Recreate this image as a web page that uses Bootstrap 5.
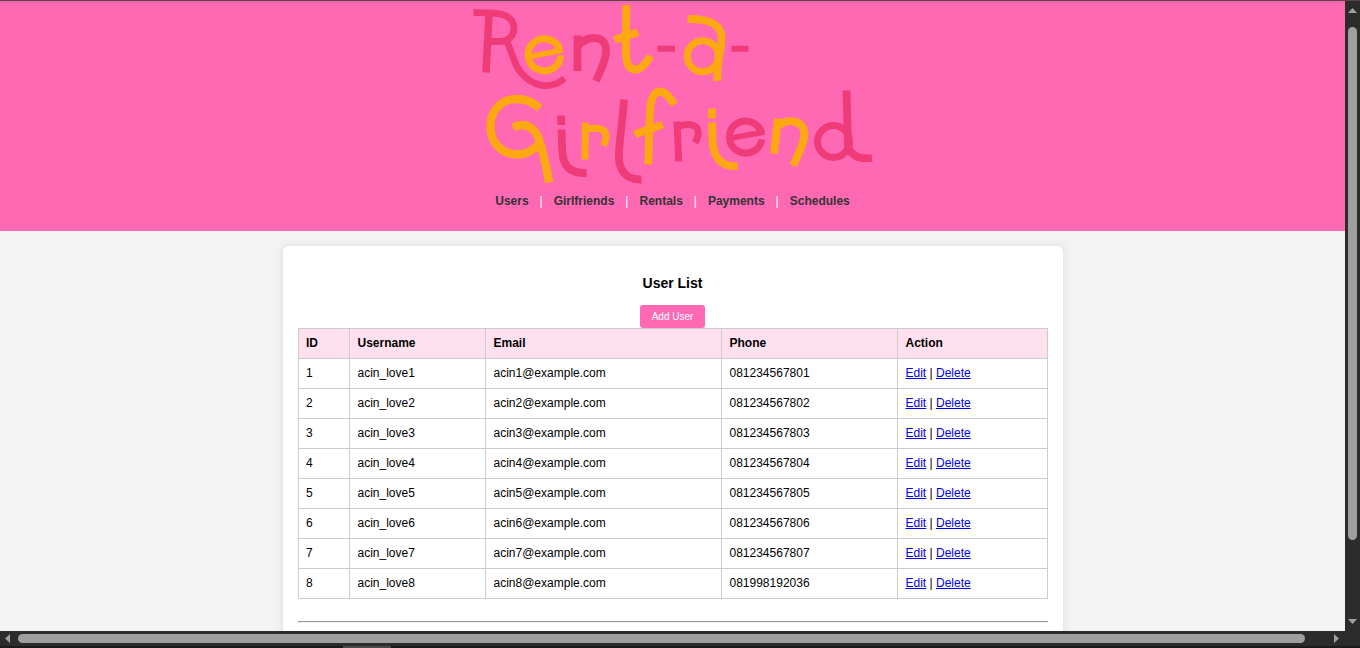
<!DOCTYPE html>
<html lang="en">
<head>
<meta charset="utf-8">
<meta name="viewport" content="width=device-width, initial-scale=1">
<title>Rent-a-Girlfriend</title>
<link href="https://cdn.jsdelivr.net/npm/bootstrap@5.3.0/dist/css/bootstrap.min.css" rel="stylesheet">
<style>
  body { font-family: "Liberation Sans", Arial, sans-serif; font-size: 12px; line-height: 14px; color: #000; background: #2c2c2c; }
  .window-frame { height: 648px; border-top: 1px solid #5a4343; }
  .page-row { height: 630px; }
  .page-view { background: #f3f3f3; }
  .site-header { background: #ff69b4; height: 230px; }
  .logo { width: 410px; height: 190px; margin-left: 5px; }
  .site-nav { gap: 11.3px; font-weight: 700; color: #fff; padding-top: 3px; }
  .site-nav span { font-weight: 400; width: 2.5px; display: flex; justify-content: center; }
  .site-nav a { color: #333; text-decoration: none; }
  .panel { width: 780px; height: 520px; margin-top: 15px; padding: 29px 15px 0; background: #fff; border-radius: 6px; box-shadow: 0 0 10px rgba(0,0,0,.1); }
  .panel h1 { font-size: 14px; line-height: 16px; font-weight: 700; margin: 0 0 14px; }
  .btn-add { background: #ff69b4; color: #fff; font-size: 10px; line-height: 11px; width: 65px; height: 23px; padding: 6px 0; border: 0; border-radius: 3px; }
  .user-table { width: 749px; margin-left: 1px; table-layout: fixed; border-collapse: collapse; }
  .user-table th, .user-table td { height: 30px; padding: 0 8px 1px 7.5px; border: 1px solid #ccc; text-align: left; vertical-align: middle; }
  .user-table th:first-child, .user-table td:first-child { padding-left: 7px; }
  .user-table th { background: #ffe0ee; }
  .user-table a { color: #00e; text-decoration: underline; }
  .rule { height: 2px; margin-top: 22px; border-top: 1px solid #9a9a9a; border-bottom: 1px solid #eee; border-left: 1px solid #9a9a9a; }
  .vbar { width: 15px; padding: 7px 0 7px; }
  .vthumb { width: 9px; height: 513px; margin-top: 14px; border-radius: 5px; background: #9f9f9f; }
  .hbar { height: 15px; padding-left: 5px; }
  .hthumb { width: 1287px; height: 9px; margin-left: 8px; margin-right: 29px; border-radius: 5px; background: #9f9f9f; }
  .taskbar { height: 2px; background: #1c1a1b; padding-left: 343px; }
  .taskbar div { width: 48px; height: 2px; background: #484848; }
  .arrow { fill: #9f9f9f; display: block; flex: none; }
</style>
</head>
<body class="overflow-hidden">
<div class="window-frame d-flex flex-column overflow-hidden">
  <div class="page-row d-flex flex-shrink-0">
    <main class="page-view flex-grow-1 d-flex flex-column align-items-center overflow-hidden">
      <header class="site-header w-100 flex-shrink-0 d-flex flex-column align-items-center">
        <svg class="logo flex-shrink-0" viewBox="470 1 410 190" fill="none" stroke-width="7.8" role="img" aria-label="Rent-a-Girlfriend">
          <g stroke="#ef3b78">
            <path stroke-width="7.500" d="M489 14L486 72.500"/>
            <path stroke-width="6.800" d="M473.500 12.700C484 12.500 494 12.500 502 14.500C510 16.500 514 22 514 29C513.500 37 507 41 501 41.500L490 41.500M507 42C512 52 513 61 519 70C532 88 551 90 564.500 78.500"/>
            <path d="M577.500 35.500V71M578 46C583 40 588 38 594 38C604 38 606.500 45 606 53C605 63 600 71 596 81"/>
            <path stroke-width="6" d="M657.500 48.800H675M731.500 48.800H748.500"/>
            <path d="M561.200 115.500V125M561.500 129.500C562 138 561.500 148 563 157C565 168 573 173.500 586.500 173M624 99.500C623 117 620 136 619 152C617.500 170 626 180 641.500 179.500"/>
            <path stroke-width="7" d="M677 121.500L678.700 161.500M680 126C687 123.500 694 124.500 697 128C699.500 133 698 138 695 142.500"/>
            <path stroke-width="5.500" d="M731 138L764.500 132"/>
            <path stroke-width="7" d="M761.400 132.700A16.300 16 0 1 0 761.800 139.500"/>
            <path d="M846.500 90.500L848 145C849 154 858 160 872 158"/><circle cx="833.500" cy="141.500" r="16" stroke-width="7"/>
          </g>
          <g stroke="#fca811">
            <path stroke-width="5.500" d="M528 57L563 50"/>
            <path stroke-width="7" d="M559.800 50.700A16.300 16 0 1 0 560.700 56.500" transform="translate(0 -1.200)"/>
            <path d="M626.300 5C626.500 20 625.500 35 626 53C626 64 629 70 636 69.500C642 69 646 63 650.500 56M614.500 40C622 37 629 36 638 32"/>
            <path d="M687.500 19C698 19 708 20 714 24C720 28 722 34 721.500 40C721 50 716 66 717.500 81"/><circle cx="702.700" cy="56.300" r="15.500" stroke-width="7"/>
            <path stroke-width="8.300" d="M540 108C530 100 520 98 511 99.500C498 102 490 114 490.500 127C490.500 142 501 154 517 154.500C526 154.500 534 150 540 143M513 127.500C524 122 532 126 537 135C543 148 546 165 549 182.500"/>
            <path stroke-width="7" d="M585.300 122.500L585 159.500M587 129.500C594 127.500 602 127.500 605 132C607 137 605.500 142 603 145.500"/>
            <path d="M648.200 164.500C649 145 649 128 650 110C651 97 655 91.500 660 91.500C666 92 670 98 674.500 104.500M635 135C643 130 653 129 662.500 124.500"/>
            <path d="M711.800 108.500V118.500M712 122.500C712.500 130 712 138 713 145C715 159 722 167 737.500 166"/>
            <path d="M778 118.500L774 153.500M779 125C785 121 791 120.500 796 122C803 124 805 131 804 138C802 148 798 155 793 165.500"/>
          </g>
        </svg>
        <nav class="site-nav d-flex">
          <a href="#">Users</a><span>|</span><a href="#">Girlfriends</a><span>|</span><a href="#">Rentals</a><span>|</span><a href="#">Payments</a><span>|</span><a href="#">Schedules</a>
        </nav>
      </header>
      <section class="panel flex-shrink-0 d-flex flex-column align-items-center">
        <h1>User List</h1>
        <button class="btn btn-add" type="button">Add User</button>
        <table class="user-table">
          <colgroup><col style="width:51px"><col style="width:136px"><col style="width:236px"><col style="width:176px"><col style="width:150px"></colgroup>
          <thead><tr><th>ID</th><th>Username</th><th>Email</th><th>Phone</th><th>Action</th></tr></thead>
          <tbody>
            <tr><td>1</td><td>acin_love1</td><td>acin1@example.com</td><td>081234567801</td><td><a href="#">Edit</a> | <a href="#">Delete</a></td></tr>
            <tr><td>2</td><td>acin_love2</td><td>acin2@example.com</td><td>081234567802</td><td><a href="#">Edit</a> | <a href="#">Delete</a></td></tr>
            <tr><td>3</td><td>acin_love3</td><td>acin3@example.com</td><td>081234567803</td><td><a href="#">Edit</a> | <a href="#">Delete</a></td></tr>
            <tr><td>4</td><td>acin_love4</td><td>acin4@example.com</td><td>081234567804</td><td><a href="#">Edit</a> | <a href="#">Delete</a></td></tr>
            <tr><td>5</td><td>acin_love5</td><td>acin5@example.com</td><td>081234567805</td><td><a href="#">Edit</a> | <a href="#">Delete</a></td></tr>
            <tr><td>6</td><td>acin_love6</td><td>acin6@example.com</td><td>081234567806</td><td><a href="#">Edit</a> | <a href="#">Delete</a></td></tr>
            <tr><td>7</td><td>acin_love7</td><td>acin7@example.com</td><td>081234567807</td><td><a href="#">Edit</a> | <a href="#">Delete</a></td></tr>
            <tr><td>8</td><td>acin_love8</td><td>acin8@example.com</td><td>081998192036</td><td><a href="#">Edit</a> | <a href="#">Delete</a></td></tr>
          </tbody>
        </table>
        <div class="rule w-100"></div>
      </section>
    </main>
    <div class="vbar d-flex flex-column align-items-center">
      <svg class="arrow" width="9" height="5"><path d="M4.500 0L9 5H0z"/></svg>
      <div class="vthumb"></div>
      <svg class="arrow mt-auto" width="9" height="5"><path d="M0 0H9L4.500 5z"/></svg>
    </div>
  </div>
  <div class="hbar d-flex align-items-center flex-shrink-0">
    <svg class="arrow" width="5" height="9"><path d="M5 0V9L0 4.500z"/></svg>
    <div class="hthumb flex-shrink-0"></div>
    <svg class="arrow" width="5" height="9"><path d="M0 0V9L5 4.500z"/></svg>
  </div>
  <div class="taskbar flex-shrink-0"><div></div></div>
</div>
<script src="https://cdn.jsdelivr.net/npm/bootstrap@5.3.0/dist/js/bootstrap.bundle.min.js"></script>
</body>
</html>
